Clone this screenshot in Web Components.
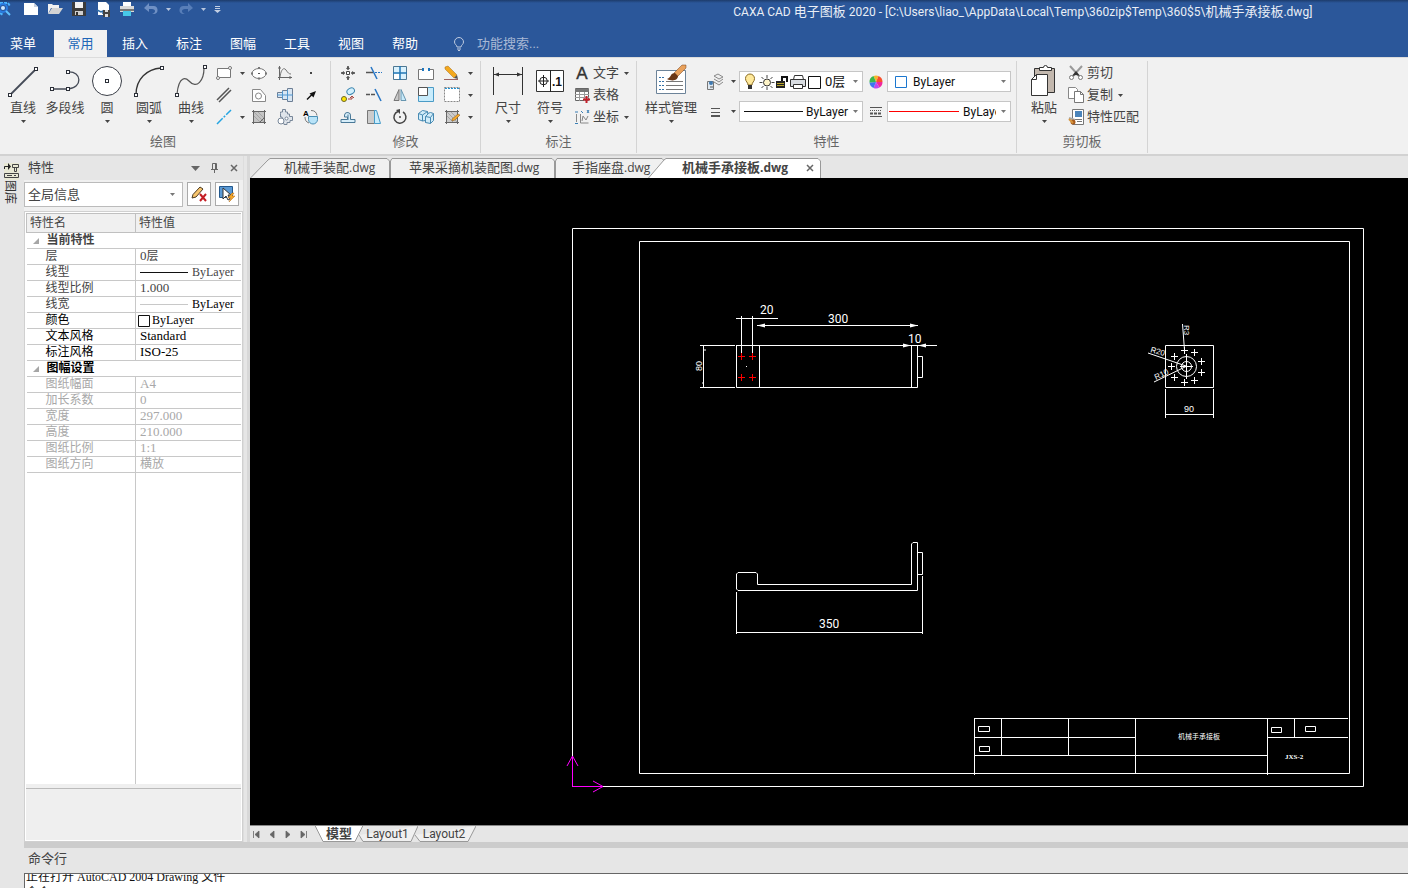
<!DOCTYPE html>
<html lang="zh-CN">
<head>
<meta charset="utf-8">
<title>CAXA CAD 电子图板 2020</title>
<style>
html,body{margin:0;height:100%;overflow:hidden}
body{font:13px/18px Roboto,"Noto Sans CJK SC",sans-serif;color:#444;background:#e6e6e6}
</style>
</head>
<body>
<cad-app></cad-app>
<script>
const base = `<style>
*{box-sizing:border-box}
button,select,input{font:inherit;color:inherit;background:none;border:0;padding:0;margin:0;outline:0}
svg{display:block;flex:none}
.l{font-size:12px}
:host([hidden]){display:none}
</style>`;

/* Latin runs are set one size below the Chinese ones */
const mix = s => s.replace(/[\x20-\x7e]+/g, m => `<span class="l">${m}</span>`);

function define(name, render) {
  customElements.define(name, class extends HTMLElement {
    connectedCallback() {
      if (this.shadowRoot) return;
      this.attachShadow({mode: 'open'}).innerHTML = base + render(this);
    }
  });
}

const sq = (x, y, s = 3) => `<rect x="${x}.500" y="${y}.500" width="${s}" height="${s}" fill="#fff" stroke="#2b2f38"/>`;
const caret = (c = '#444') => `<svg width="5" height="3" viewBox="0 0 5 3"><path d="M0 0h5L2.500 3z" fill="${c}"/></svg>`;

const small = {
  rect: `<path d="M1.500 3.500h13v9h-13z" fill="#fff" stroke="#777"/><circle cx="14" cy="3" r="1.500" fill="#fff" stroke="#777"/><circle cx="2" cy="13" r="1.500" fill="#fff" stroke="#777"/>`,
  ellipse: `<ellipse cx="8" cy="8.500" rx="7" ry="5" fill="#fff" stroke="#777"/><rect x="7" y="8" width="2" height="1" fill="#555"/><path d="M7 3h2M7 13.500h2M0 8.500h2M14 8.500h2" stroke="#777" stroke-width="2"/>`,
  curve: `<path d="M2.500 1v14M1 12.500h14M1 3h3M13 11v3" stroke="#666" fill="none"/><path d="M3 12C4 4 7 2 9 5S12 9 14 9" stroke="#777" fill="none"/>`,
  dot: `<rect x="7" y="7" width="2" height="2" fill="#444"/>`,
  parallel: `<path d="M1 13 13 1M3 15 15 3" stroke="#555" stroke-width="1.500"/>`,
  shape: `<path d="M1.500 2.500h8l5 6v6h-13z" fill="#fff" stroke="#888"/><circle cx="7.500" cy="9" r="3" fill="#fff" stroke="#888"/>`,
  shaft: `<path d="M.5 5.500h5v-2h5v-2h5v13h-5v-2h-5v-2h-5z" fill="#d8e6f3" stroke="#6d7e94"/><path d="M5.500 4v8M10.500 3v10M0 8h16" stroke="#5196cf"/>`,
  arrow: `<path d="M4 12.500 9 7.500" stroke="#111" stroke-width="1.500"/><path d="m13 4-2.500 6.500-4-4z" fill="#111"/>`,
  center: `<path d="M1 15 15 1" stroke="#25a5e2" stroke-width="1.500" stroke-dasharray="8 1.500 2 1.500"/>`,
  hatch: `<path d="M3 3h10v10H3z" fill="#c4c4c4"/><path d="M1 2.500h14M1 13.500h14M2.500 1v14M13.500 1v14" stroke="#666"/><path d="m3 7 6 6M3 3l10 10M7 3l6 6" stroke="#a5a5a5"/><path d="m9 13 4-4" stroke="#666"/>`,
  gears: `<path d="M3.500 4.500V3h2V.500h3V3h2v2h2v2.500h3v4h-2.500v2h-3v2h-3l-1-4-1-3.500H3.500z" fill="#dfe4ea" stroke="#788799"/><circle cx="4" cy="12" r="3" fill="#fff" stroke="#788799"/><circle cx="9.500" cy="9.500" r="1.500" fill="#fff" stroke="#788799"/>`,
  areaA: `<path d="M5.500 7.500h9v3a4.500 4.500 0 0 1-9 0z" fill="#b8e3f8" stroke="#4b8fb4"/><path d="M8 1.500a6 6 0 0 1 6 5M2 8c0 3 1 5 4 6" stroke="#777" fill="none"/><text x="0" y="7" font-size="8" font-weight="700" font-family="Liberation Sans">A</text>`,
  move: `<path d="M6.500 6.500h3v3h-3z" fill="#fff" stroke="#444"/><path d="M8 1v4M8 11v4M1 8h4M11 8h4" stroke="#555" stroke-width="1.500"/><path d="M6 4h4L8 1zM6 12h4l-2 3zM4 6v4L1 8zM12 6v4l3-2z" fill="#555"/>`,
  trim: `<path d="m5 2 6 12" stroke="#2876c5" stroke-width="1.500"/><path d="M0 7.500h7" stroke="#555" stroke-width="1.500"/><path d="M9 7.500h7" stroke="#2876c5" stroke-dasharray="2 1"/>`,
  array: `<path d="M1.500 1.500h13v13h-13z" fill="#d9f1fd" stroke="#4c7792"/><path d="M2 9h5v5H2z" fill="#fff"/><path d="M8 1v14M1 8h14" stroke="#2277b5" stroke-width="1.500"/>`,
  split: `<path d="M4 4.500H.5v10h15v-10H12" fill="#fff" stroke="#777"/><path d="M5 3v3M11 3v3" stroke="#1d75bd" stroke-width="2"/>`,
  erase: `<path d="m1 2 3-1 9 9-3 3L1 4z" fill="#f4a91e" stroke="#a36b1c" stroke-width=".5"/><path d="m10 13 4 1-1-4z" fill="#555"/><path d="M0 14.500h14" stroke="#9b6262"/>`,
  copy: `<ellipse cx="10.500" cy="4.500" rx="4" ry="3" transform="rotate(-30 10 4)" fill="#d1effc" stroke="#3e86af"/><circle cx="4" cy="12" r="2.500" fill="#ffe600" stroke="#6b6426"/><path d="M8 12h4V9l-2 2m2-2 2 2" stroke="#a7463f" fill="none"/>`,
  extend: `<path d="m9 2 6 12" stroke="#2876c5" stroke-width="1.500"/><path d="M0 7.500h10" stroke="#555" stroke-width="1.500" stroke-dasharray="4 1"/>`,
  mirror: `<path d="M7 2.500v11H2z" fill="#c8c8c8" stroke="#777"/><path d="M9 2.500v11h5z" fill="#c8eafa" stroke="#6695af"/>`,
  scale: `<path d="M.5.500h15v14H.500z" fill="#c8ecfc" stroke="#4a9bc6"/><path d="M.5.500h9v8h-9z" fill="#fff" stroke="#555"/>`,
  stretch: `<path d="M.5.500h15v14H.500z" fill="#fff" stroke="#888" stroke-dasharray="2 1"/><path d="M1 1.500h14" stroke="#2294d4" stroke-dasharray="2 1"/>`,
  offset: `<path d="M1 13.500h14v-3h-4.500V7a3 3 0 0 0-6-1v2h3v2.500H1z" fill="#d7eefa" stroke="#497897"/><path d="M8 5.500V11" stroke="#497897"/>`,
  taper: `<path d="M1.500 1.500h7v13h-7z" fill="#ccc" stroke="#777"/><path d="M8.500 1.500h2l4 13h-6z" fill="#c8ecfc" stroke="#469bc8"/>`,
  rotate: `<path d="M6 2.500a6 6 0 1 0 5 .500" fill="none" stroke="#444" stroke-width="1.500"/><path d="m4 1 4-1v5z" fill="#444"/><circle cx="8" cy="8" r="1" fill="#444"/>`,
  cube: `<path d="m.5 4.500 4-3 5 1v2l3-1 3 1v7l-3 3-5-1v-2l-3 .500-4-1.500z" fill="#d1ecf9" stroke="#478ab2"/><path d="m.5 4.500 4 1.500v6M4.500 6l5-3.500M7.500 7.500l5 1v6M7.500 7.500v6M12.500 8.500l3-4M7.500 7.500l3-3" fill="none" stroke="#478ab2"/>`,
  edit: `<path d="M3 3h10v10H3z" fill="#ccc"/><path d="M1 2.500h14M1 13.500h14M2.500 1v14M13.500 1v14" stroke="#666"/><path d="m3 7 6 6M3 3l10 10M7 3l6 6" stroke="#a5a5a5"/><path d="m8 10 6-5 2 1-5 5-3 1z" fill="#f5a82b" stroke="#79521c" stroke-width=".5"/>`,
  textA: `<text x="8" y="14" text-anchor="middle" font-size="17" font-family="Liberation Sans" fill="#333" stroke="#333" stroke-width=".4">A</text>`,
  table: `<path d="M1.500 1.500h13v12h-13z" fill="#fff" stroke="#666"/><path d="M1 2h14v3H1z" fill="#777"/><path d="M1 7.500h14M1 10.500h14M5.500 5v9M10.500 5v9" stroke="#999"/><path d="M12.500 9v7M9 12.500h7" stroke="#c3202b" stroke-width="2"/>`,
  coord: `<path d="M2.500 5v8M6.500 5v9h8M8 12l1-5 3 4 2-4" fill="none" stroke="#888"/><path d="M1 3h3M1 14.500h3M7 2l2 2M13 1l2 3M13 4l2-3" stroke="#3a7fb5"/>`,
  layers: `<path d="m7 2 4-2 5 3-4 2zM7 5l5 3 4-3M7 8l5 3 4-3" fill="#eee" stroke="#888"/><path d="M.5 7.500h6v8h-6z" fill="#dfe8f0" stroke="#777"/><circle cx="4" cy="9" r="2" fill="#3f79b0"/><path d="M3 13h3" stroke="#555"/>`,
  lines: `<path d="M4 4.500h9M4 8.500h9" stroke="#555"/><path d="M4 12h9" stroke="#555" stroke-width="2"/>`,
  wheel: `<path d="M8 8 5.500 2A6.500 6.500 0 0 1 10.500 2z" fill="#f7b62b"/><path d="m8 8 2.500-6A6.500 6.500 0 0 1 14.500 8z" fill="#f9502b"/><path d="M8 8h6.500a6.500 6.500 0 0 1-3 5.500z" fill="#f0279c"/><path d="m8 8 3.500 5.500a6.500 6.500 0 0 1-6 .500z" fill="#c046ee"/><path d="m8 8-2.500 6A6.500 6.500 0 0 1 1.500 8.500z" fill="#3b76f0"/><path d="M8 8l-6.500.500A6.500 6.500 0 0 1 5.500 2z" fill="#3cb84c"/>`,
  ltype: `<path d="M2 3.500h12" stroke="#555"/><path d="M2 6.500h12" stroke="#555" stroke-dasharray="1 1"/><path d="M2 9.500h12" stroke="#555" stroke-width="2" stroke-dasharray="3 1"/><path d="M2 12.500h12" stroke="#555"/>`,
  cut: `<path d="m2 1 9 10M14 1 5 11" stroke="#999" stroke-width="2"/><path d="m8 6 4 5-4-1-4 1z" fill="#333"/><circle cx="3.500" cy="12.500" r="2" fill="#fff" stroke="#777"/><circle cx="12.500" cy="12.500" r="2" fill="#fff" stroke="#777"/>`,
  dup: `<path d="M.5.500h7l2 2v9H.500z" fill="#fff" stroke="#888"/><path d="M6.500 4.500h6l3 3v8h-9z" fill="#fff" stroke="#777"/><path d="M12.500 4.500v3h3" fill="none" stroke="#777"/>`,
  match: `<path d="M4.500.500h11v15h-11z" fill="#fff" stroke="#777"/><path d="M7 2h7v6H7z" fill="#4a84bb"/><path d="M7 10.500h7M9 12.500h5" stroke="#777"/><path d="m1 9 6 2" stroke="#aaa" stroke-width="2"/><circle cx="5" cy="13" r="2.500" fill="#a85b1c"/><path d="m1 10 4 4" stroke="#d7963e" stroke-width="2"/>`
};
const big = {
  line: `<path d="M2.500 30.500 30 3" stroke="#454b57" stroke-width="1.800"/>${sq(1, 28)}${sq(27, 2)}`,
  pline: `<path d="M3 24h16M19 7c14-1 15 16 0 17" fill="none" stroke="#454b57" stroke-width="1.300"/>${sq(1, 22)}${sq(17, 22)}${sq(17, 5)}`,
  circle: `<circle cx="16" cy="16" r="14.500" fill="#fff" stroke="#3b3f48"/>${sq(14, 14)}`,
  arc: `<path d="M3 29.500C3 14 14 4 28 3" fill="none" stroke="#333" stroke-width="1.300"/>${sq(1, 28)}${sq(27, 1)}`,
  spline: `<path d="M2 29C4 10 11 13 14 16c8 9 15-1 15-13" fill="none" stroke="#555" stroke-width="1.200"/>${sq(0, 28)}${sq(28, 0)}`,
  dim: `<path d="M1.500 2v28M30.500 2v28" stroke="#333"/><path d="M2 9.500h28" stroke="#333"/><path d="m2 9.500 5-2v4zM30 9.500l-5-2v4z" fill="#333"/>`,
  symbol: `<path d="M2.500 5.500h27v21h-27z" fill="#fff" stroke="#333"/><path d="M16.500 5v22M4 16h11M9.500 10v12" stroke="#222"/><circle cx="9.500" cy="16" r="3.800" fill="none" stroke="#222"/><text x="18" y="21" font-family="Liberation Sans" font-size="12" font-weight="700" fill="#111">.1</text>`,
  style: `<path d="M1.500 5.500h29v23h-29z" fill="#fff" stroke="#6c8399"/><path d="M4 12.500h5M4 16.500h5M4 20.500h5M4 24.500h5" stroke="#3472a8" stroke-dasharray="2 1"/><path d="M11 16.500h17M11 20.500h17M11 24.500h17" stroke="#777"/><path d="m19 8 8-8h4v3L22 12z" fill="#e9a15b" stroke="#75401c" stroke-width=".5"/><path d="M20 8c-5 0-3 4-8 6 6 3 11 1 11-3z" fill="#6b3715"/>`,
  paste: `<path d="M6.500 3.500h20v24h-20z" fill="#c3b8ae" stroke="#333"/><path d="M11.500 5.500v-3h4a2 2 0 0 1 4 0h4v3z" fill="#fff" stroke="#333"/><path d="M3.500 14.500 8.500 9.500h11v21h-16z" fill="#fff" stroke="#333"/><path d="M3.500 14.500h5v-5" fill="none" stroke="#333"/>`
};
const icon = (n, s = 16) => `<svg width="${s}" height="${s}" viewBox="0 0 ${s} ${s}" style="overflow:visible">${(s === 32 ? big : small)[n]}</svg>`;

/* ---------- title bar ---------- */
define('title-bar', () => `<style>
:host{display:flex;height:30px;color:#e9eef6;background:linear-gradient(#1d3c6c,#2b579a 3px)}
.quick{flex:0 0 45%;display:flex;align-items:flex-start;padding-top:1px}
.quick button{height:16px;display:flex;align-items:center;justify-content:center;width:24px}
.quick .c{width:11px}
.quick .logo{width:19px;justify-content:flex-start}
.quick .last{margin-left:3px}
h1{flex:1;margin:0;padding:3px 0 0 4px;font-size:13px;line-height:18px;font-weight:400;text-align:center;white-space:nowrap}
</style>
<div class="quick">
<button class="logo" aria-label="应用"><svg width="12" height="14" viewBox="0 0 12 14"><path d="M0 1h8l2 3M0 11l3 2" stroke="#4ab4ff" stroke-width="2" fill="none" stroke-dasharray="3 1"/><circle cx="3" cy="6" r="4" fill="none" stroke="#2a7be0" stroke-width="2"/><circle cx="3" cy="6" r="2" fill="#cfe9ff"/><path d="m6 9 4 4" stroke="#5fc0ff" stroke-width="2"/></svg></button>
<button aria-label="新建"><svg width="16" height="12" viewBox="0 0 16 12"><path d="M1 0h10l4 4v8H1z" fill="#fff"/><path d="M11 0v4h4" fill="#c8d2e0"/></svg></button>
<button aria-label="打开"><svg width="16" height="12" viewBox="0 0 16 12"><path d="M1 11V1h4l1 1h6v3H4z" fill="#f1f1f1"/><path d="m1 11 4-6h11l-4 6z" fill="#d3d3d3"/></svg></button>
<button aria-label="保存"><svg width="14" height="14" viewBox="0 0 14 14"><path d="M0 0h14v14H0z" fill="#3b3b3b"/><path d="M3 0h8v6H3z" fill="#f2f2f2"/><path d="M3 9h8v4H3z" fill="#cfcfcf"/><path d="M4 10h2v3H4z" fill="#333"/></svg></button>
<button aria-label="另存为"><svg width="16" height="16" viewBox="0 0 16 16"><path d="M3 1h8l3 3v10H3z" fill="#fff"/><path d="m2 9 4 2 2-1v3" stroke="#316da8" stroke-width="1.500" fill="none"/><path d="M8 9h7v7H8z" fill="#444"/><path d="M10 9h3v2h-3zM10 13h3v3h-3z" fill="#ddd"/></svg></button>
<button aria-label="打印"><svg width="16" height="16" viewBox="0 0 16 16"><path d="M4 1h8v4H4z" fill="#fff"/><path d="M1 5h14v6H1z" fill="#d9d9d9"/><path d="M1 8h14v2H1z" fill="#777"/><path d="M4 10h8v5H4z" fill="#48c9e8"/></svg></button>
<button aria-label="撤销"><svg width="14" height="12" viewBox="0 0 14 12"><path d="M5 0v3h4a4 4 0 0 1 1 8H8c4-1 4-5 0-5H5v3L0 5z" fill="#6f90c4"/></svg></button>
<button class="c" aria-label="撤销列表">${caret('#b8c6de')}</button>
<button aria-label="重做"><svg width="14" height="12" viewBox="0 0 14 12"><path d="M9 0v3H5a4 4 0 0 0-1 8h2C2 10 2 6 6 6h3v3l5-4z" fill="#587eb8"/></svg></button>
<button class="c" aria-label="重做列表">${caret('#b8c6de')}</button>
<button class="c last" aria-label="自定义"><svg width="7" height="7" viewBox="0 0 7 7"><path d="M1 0h5v1H1zM1 2h5v1H1zM0 4h7L3.500 7z" fill="#c3cfe3"/></svg></button>
</div>
<h1>${mix('CAXA CAD 电子图板 2020 - [C:\\Users\\liao_\\AppData\\Local\\Temp\\360zip$Temp\\360$5\\机械手承接板.dwg]')}</h1>`);

define('menu-bar', () => `<style>
:host{display:flex;height:27px;background:#2b579a;color:#fff}
button{width:54px;height:27px;text-align:center}
button:first-of-type{width:46px;margin-right:8px}
.on{background:#f1f1f1;color:#2066b8;width:53px;margin-right:1px}
label{display:flex;align-items:center;margin-left:21px;gap:12px}
input{width:90px;height:20px}
input::placeholder{color:#a9b9d5;opacity:1}
</style>
<button>菜单</button><button class="on">常用</button>${['插入','标注','图幅','工具','视图','帮助'].map(t => `<button>${t}</button>`).join('')}
<label><svg width="12" height="14" viewBox="0 0 12 14"><path d="M4 10C4 8 1.500 7.500 1.500 5a4.500 4.500 0 0 1 9 0C10.500 7.500 8 8 8 10z" fill="none" stroke="#c0cce0"/><path d="M4 12h4M5 13.500h2" stroke="#c0cce0"/></svg><input type="text" aria-label="功能搜索" placeholder="功能搜索..."></label>`);

/* ---------- ribbon ---------- */
define('ribbon-group', e => `<style>
:host{display:flex;flex-direction:column;flex:none;height:92px;margin-top:3px;border-right:1px solid #d4d4d4}
.body{display:flex;height:72px;align-items:flex-start}
.name{text-align:center;color:#666;line-height:18px;height:20px}
</style><div class="body"><slot></slot></div><div class="name">${e.getAttribute('label')}</div>`);

define('big-button', e => `<style>
:host{display:block;flex:none;width:42px}
button{width:100%;display:flex;flex-direction:column;align-items:center;white-space:nowrap;padding-top:4px}
.t{height:18px;line-height:18px;margin-top:2px}
.t+svg{margin-top:3px}
</style><button>${icon(e.getAttribute('icon'), 32)}<span class="t">${e.getAttribute('label')}</span>${e.hasAttribute('menu') ? caret() : ''}</button>`);

define('tool-button', e => `<style>
:host{display:flex;align-items:center;height:22px}
button{display:flex;align-items:center;justify-content:center;height:22px;min-width:26px;white-space:nowrap}
.m{min-width:${e.hasAttribute('label') ? 15 : 10}px}
.t{margin-left:3px}
</style><button aria-label="${e.getAttribute('label') || e.getAttribute('icon')}">${icon(e.getAttribute('icon'))}${e.hasAttribute('label') ? `<span class="t">${e.getAttribute('label')}</span>` : ''}</button>${e.hasAttribute('menu') ? `<button class="m" aria-label="更多">${caret()}</button>` : ''}`);

define('prop-combo', e => `<style>
:host{display:flex;align-items:center;width:124px;height:21px;background:#fff;border:1px solid #c6c6c6;color:#111;padding:0 4px}
:host([tight]){padding-left:1px}
select{appearance:none;flex:1 1 0;min-width:0;height:19px;overflow:hidden;white-space:nowrap;font-size:${e.getAttribute('value') === '0层' ? 13 : 12}px}
.c{flex:none;margin-left:5px}
:host([wide]) .c{margin-left:3px}
</style><slot></slot><select aria-label="${e.getAttribute('name')}"><option>${e.getAttribute('value')}</option></select><span class="c">${caret('#777')}</span>`);

const tb = (i, m) => `<tool-button icon="${i}"${m ? ' menu' : ''}></tool-button>`;
define('ribbon-bar', () => `<style>
:host{display:flex;height:99px;background:#f1f1f1;border-top:1px solid #dcdcdc;border-bottom:2px solid #d2d2d2}
.draw{display:grid;grid-template-columns:35px 26px 26px 26px;margin:1px 0 0 -1px}
.draw tool-button{width:26px}
.mod{display:grid;grid-template-columns:26px 26px 26px 26px 36px;margin:1px 5px 0 4px}
.col{display:flex;flex-direction:column;margin:1px 0 0 3px}
.gap{margin-left:6px}
.wide{width:56px}
.props{display:grid;grid-template-columns:37px 124px 24px 124px;row-gap:9px;align-items:center;margin:10px 5px 0 3px}
.props tool-button{height:21px}
</style>
<ribbon-group label="绘图" style="width:331px;padding:0 6px 0 2px">
<big-button icon="line" label="直线" menu></big-button><big-button icon="pline" label="多段线"></big-button><big-button icon="circle" label="圆" menu></big-button><big-button icon="arc" label="圆弧" menu></big-button><big-button icon="spline" label="曲线" menu></big-button>
<div class="draw">${tb('rect',1)+tb('ellipse')+tb('curve')+tb('dot')+tb('parallel')+tb('shape')+tb('shaft')+tb('arrow')+tb('center',1)+tb('hatch')+tb('gears')+tb('areaA')}</div>
</ribbon-group>
<ribbon-group label="修改" style="width:150px">
<div class="mod">${tb('move')+tb('trim')+tb('array')+tb('split')+tb('erase',1)+tb('copy')+tb('extend')+tb('mirror')+tb('scale')+tb('stretch',1)+tb('offset')+tb('taper')+tb('rotate')+tb('cube')+tb('edit',1)}</div>
</ribbon-group>
<ribbon-group label="标注" style="width:156px">
<big-button class="gap" icon="dim" label="尺寸" menu></big-button><big-button icon="symbol" label="符号" menu></big-button>
<div class="col"><tool-button icon="textA" label="文字" menu></tool-button><tool-button icon="table" label="表格"></tool-button><tool-button icon="coord" label="坐标" menu></tool-button></div>
</ribbon-group>
<ribbon-group label="特性" style="width:380px">
<big-button class="gap wide" icon="style" label="样式管理" menu></big-button>
<div class="props">
<tool-button icon="layers" menu></tool-button>
<prop-combo name="图层" value="0层"><svg width="80" height="18" viewBox="0 0 80 18" style="display:block;flex:none;margin-right:1px">
<path d="M4 12C4 9 1.500 9 1.500 5.500a4.500 4.500 0 0 1 9 0C10.500 9 8 9 8 12z" fill="#ffe99b" stroke="#8a6b22"/><path d="M4 13h4M4 15h4" stroke="#333" stroke-width="2"/>
<circle cx="23" cy="9.500" r="3.500" fill="#fff5c8" stroke="#333"/><path d="M23 2v3M23 14v3M15.500 9.500h3M27.500 9.500h3M17.500 4l2 2M26.500 13l2 2M28.500 4l-2 2M19.500 13l-2 2" stroke="#444"/>
<path d="M38 9V4h5v5" fill="none" stroke="#111" stroke-width="2"/><path d="M32 8h9v7h-9z" fill="#222"/><path d="M33 10.500h7M33 12.500h7" stroke="#b6a32b"/>
<path d="M50.500 2.500h8l1 4h-10z" fill="#fff" stroke="#333"/><path d="M46.500 6.500h15v7h-15z" fill="#d9dde2" stroke="#333"/><path d="M49.500 11.500h9v4h-9z" fill="#fff" stroke="#333"/>
<path d="M64.500 3.500h12v12h-12z" fill="#fff" stroke="#111"/></svg></prop-combo>
<tool-button icon="wheel"></tool-button>
<prop-combo name="颜色" value="ByLayer"><svg width="21" height="14" viewBox="0 0 21 14" style="flex:none"><path d="M3.500 1.500h11v11h-11z" fill="#fff" stroke="#1b77cf"/></svg></prop-combo>
<tool-button icon="lines" menu></tool-button>
<prop-combo wide name="线型" value="ByLayer"><svg width="62" height="3" style="flex:none"><path d="M0 1.500h59" stroke="#111"/></svg></prop-combo>
<tool-button icon="ltype"></tool-button>
<prop-combo tight name="线宽" value="ByLayer"><svg width="74" height="3" style="flex:none"><path d="M0 1.500h70" stroke="#f00"/></svg></prop-combo>
</div>
</ribbon-group>
<ribbon-group label="剪切板" style="width:131px">
<big-button class="gap" icon="paste" label="粘贴" menu></big-button>
<div class="col"><tool-button icon="cut" label="剪切"></tool-button><tool-button icon="dup" label="复制" menu></tool-button><tool-button icon="match" label="特性匹配"></tool-button></div>
</ribbon-group>`);

/* ---------- side dock and property panel ---------- */
define('dock-strip', () => `<style>
:host{display:block;flex:none;width:24px;background:#e6e6e6;padding:7px 0 0 4px}
button{display:flex;flex-direction:column;align-items:center;width:15px;color:#333}
span{writing-mode:vertical-rl;text-orientation:sideways;font:12px/15px "Noto Sans CJK SC",sans-serif}
</style><button><svg width="15" height="17" viewBox="0 0 15 17"><path d="M0 0h15v17H0z" fill="#e8e8d4"/><path d="M.5 6V3.500H5" fill="none" stroke="#222"/><path d="M4 0v7l3-3.500z" fill="#222"/><path d="M8.500 1.500h6v3h-6zM10.500 5v3.500h2V5M.500 10.500h14v4H.500z" fill="none" stroke="#444"/><path d="M3 12.500h5M10 12.500h2" stroke="#444"/></svg><span>图库</span></button>`);

const line = c => `<svg width="48" height="3" style="margin-right:4px"><path d="M0 1.500h48" stroke="${c}"/></svg>`;
const rows = [
  ['', '层', '0层'],
  ['', '线型', `<div class="v">${line('#111')}<span class="b">ByLayer</span></div>`],
  ['', '线型比例', '1.000'],
  ['', '线宽', `<div class="v k">${line('#c8c8c8')}<span class="b">ByLayer</span></div>`],
  ['k', '颜色', `<div class="v n"><svg width="12" height="12"><path d="M.5.500h11v11H.500z" fill="#fff" stroke="#111"/></svg><span class="b">ByLayer</span></div>`],
  ['k', '文本风格', 'Standard'],
  ['k', '标注风格', 'ISO-25']];
const paper = [['图纸幅面','A4'],['加长系数','0'],['宽度','297.000'],['高度','210.000'],['图纸比例','1:1'],['图纸方向','横放']];
const val = s => s[0] === '<' ? s : s.replace(/[\x20-\x7e]+/g, m => `<span class="w">${m}</span>`);
const head = (t, c) => `<tr><th colspan="2" scope="rowgroup" class="${c}"><svg width="6" height="6" viewBox="0 0 6 6"><path d="M6 0v6H0z" fill="#a6a6a6"/></svg>${t}</th></tr>`;
define('property-panel', () => `<style>
:host{display:flex;flex-direction:column;flex:none;width:219px;background:#f0f0f0}
header{display:flex;align-items:center;height:24px;background:#e6e6e6;padding:0 0 0 4px}
header b{flex:1;font-weight:400}
header button{width:19px;height:16px;display:flex;align-items:center;justify-content:center}
.pick{display:flex;height:31px;padding-top:2px;gap:4px}
.sel{display:flex;align-items:center;width:159px;height:25px;background:#fff;border:1px solid #bbb;padding:0 7px 0 3px}
.sel select{appearance:none;flex:1;height:22px}
.pick button{width:24px;height:24px;background:#fff;border:1px solid #aaa;display:flex;align-items:center;justify-content:center}
.box{flex:1;display:flex;flex-direction:column;border:1px solid #d0d0d0;background:#fff;padding:1px}
table{border-collapse:collapse;table-layout:fixed;width:100%;font:12px/15px "Liberation Serif","Noto Sans CJK SC",sans-serif}
.w{font-size:13px;line-height:12px}
td,th{height:16px;padding:0 0 0 4px;border-bottom:1px solid #c8c8c8;text-align:left;white-space:nowrap;overflow:hidden}
tbody td:first-child{border-right:1px solid #c8c8c8;padding-left:19px}
thead th{height:19px;background:#f0f0f0;font-weight:400;border:1px solid #c0c0c0;border-right:0;padding-left:3px}
tbody th{font-weight:700}
tbody th svg{display:inline-block;margin:0 8px 0 2px}
.v{display:flex;align-items:center;height:15px}.v.n{margin-left:-2px}.v svg{flex:none}.n .b{margin-left:2px}
.k,.k td{color:#000}.g td{color:#a8a8a8}
.fill{flex:1;display:flex}.fill i{width:110px;border-right:1px solid #c8c8c8}
footer{height:56px;background:#efefef;border-top:4px solid #efefef;display:flex}
footer i{flex:1;border-top:1px solid #bbb}
</style>
<header><b>特性</b><button aria-label="菜单"><svg width="9" height="5"><path d="M0 0h9L4.500 5z" fill="#666"/></svg></button><button aria-label="固定"><svg width="9" height="10" viewBox="0 0 9 10"><path d="M2.500 6V.500h4V6M1 6.500h7M4.500 7v3" fill="none" stroke="#666"/><path d="M5 1h1v5H5z" fill="#666"/></svg></button><button aria-label="关闭"><svg width="8" height="8"><path d="m1 1 6 6M7 1 1 7" stroke="#666" stroke-width="1.500"/></svg></button></header>
<div class="pick"><div class="sel"><select aria-label="信息范围"><option>全局信息</option></select>${caret('#777')}</div>
<button aria-label="清除"><svg width="18" height="18" viewBox="0 0 18 18"><path d="M3 9.500 10 2l3 2-7 8-4 1z" fill="#f8c56d" stroke="#4a3a22"/><path d="m10 9 6 7M16 9l-6 7" stroke="#c41d24" stroke-width="2"/></svg></button>
<button aria-label="快速选择"><svg width="18" height="18" viewBox="0 0 18 18"><path d="M1.500 1.500h13v11h-13z" fill="#5b9ad5" stroke="#23588c"/><path d="M5 3v11l3-3 2 4 2-1-2-4h3z" fill="#fff" stroke="#333"/><path d="m14 8-4 5h3l-2 4 6-6h-3l2-3z" fill="#f7a928" stroke="#b56a14" stroke-width=".5"/></svg></button></div>
<div class="box"><table><colgroup><col style="width:109px"><col></colgroup>
<thead><tr><th scope="col">特性名</th><th scope="col">特性值</th></tr></thead><tbody>
${head('当前特性', '')}${rows.map(r => `<tr class="${r[0]}"><td>${r[1]}</td><td>${val(r[2])}</td></tr>`).join('')}
${head('图幅设置', 'k')}${paper.map(r => `<tr class="g"><td>${r[0]}</td><td>${val(r[1])}</td></tr>`).join('')}
</tbody></table><div class="fill"><i></i></div><footer><i></i></footer></div>`);

/* ---------- document tabs ---------- */
define('doc-tab', e => {
  const w = +e.getAttribute('w'), on = e.hasAttribute('active'), sl = +e.getAttribute('slant');
  return `<style>
:host{display:block;position:relative;flex:none;width:${w}px;height:20px}
svg.bg{position:absolute;inset:0}
button{position:relative;display:flex;align-items:center;width:100%;height:20px;padding-left:${e.getAttribute('pad')}px;white-space:nowrap;font-weight:${on ? 700 : 400}}
.l{font-family:"Open Sans",sans-serif}
.x{margin-left:18px}
</style><svg class="bg" width="${w}" height="20"><path d="M${sl ? `.5 20 ${sl} 2` : '.5 20V3'}L${sl + 2} .5H${w - 3}L${w - .5} 3V20" fill="${on ? '#fff' : '#f0f0f0'}" stroke="#999"/></svg><button>${mix(e.getAttribute('label'))}${on ? '<svg class="x" width="8" height="8"><path d="m1 1 6 6M7 1 1 7" stroke="#666" stroke-width="1.500"/></svg>' : ''}</button>`;
});
define('doc-tabs', () => `<style>:host{display:flex;height:22px;padding-top:2px;background:#e6e6e6}.over{margin-left:-17px}</style>
<doc-tab label="机械手装配.dwg" w="140" slant="18" pad="34"></doc-tab><doc-tab label="苹果采摘机装配图.dwg" w="165" slant="0" pad="19"></doc-tab><doc-tab label="手指座盘.dwg" w="110" slant="0" pad="17"></doc-tab><doc-tab class="over" active label="机械手承接板.dwg" w="173" slant="16" pad="34"></doc-tab>`);

/* ---------- drawing area ---------- */
const cross = (x, y, c) => `<path d="M${x - 3} ${y}.500h7M${x}.500 ${y - 3}v7" stroke="${c}"/>`;
const arrowL = (x, y) => `<path d="M${x} ${y}.500l8-2v4z" fill="#fff" stroke="none"/>`;
const arrowR = (x, y) => `<path d="M${x} ${y}.500l-8-2v4z" fill="#fff" stroke="none"/>`;
define('cad-canvas', () => `<style>
:host{display:block;flex:1;min-height:0;background:#000;overflow:hidden}
svg{width:100%;height:100%}
text{fill:#fff;stroke:none;font-family:"Liberation Sans",sans-serif}
.d{font-family:Roboto,sans-serif;font-size:12px}.s{font-size:9px}.t{font-size:8px}
</style>
<svg role="img" aria-label="机械手承接板图纸"><g transform="translate(-250 -178)" fill="none" stroke="#fff">
<path d="M572.500 228.500h791v558h-791zM639.500 241.500h710v532h-710z"/>
<g id="title-block"><path d="M974 718.500h374M974.500 718v57M1001.500 718v37M1068.500 718v37M1135.500 718v55M1267.500 718v57M1294.500 718v19M974 737.500h161M1267 737.500h81M974 755.500h293"/>
<path d="M978.500 726.500h11v5h-11zM979.500 746.500h10v5h-10zM1271.500 727.500h10v5h-10zM1305.500 726.500h10v5h-10z"/>
<text x="1178" y="739" style="font:7px 'Noto Sans CJK SC',sans-serif">机械手承接板</text>
<text x="1285" y="759" style="font:bold 7px 'Liberation Serif',serif">JXS-2</text></g>
<g id="plan"><path d="M700 345.500h35M700 387.500h35M703.500 345v42M736 345.500h201M736.500 345v42.500H917.500V345M759.500 345v42M911.500 345v42M917 356.500h5.500v21H917"/>
<path d="M736 318.500h42M741.500 316v38M752.500 316v38M757 325.500h161"/><path d="M704 350h2M702 383h2"/>
${arrowL(757, 325)}${arrowR(918, 325)}${arrowR(911, 345)}${arrowL(918, 345)}
${cross(741, 356, '#f00')}${cross(752, 356, '#f00')}${cross(741, 377, '#f00')}${cross(752, 377, '#f00')}<path d="M746 366.500h1"/>
<text class="d" x="760" y="314">20</text><text class="d" x="828" y="323">300</text><text class="d" x="908" y="343">10</text>
<text class="s" transform="translate(702 371) rotate(-90)">80</text></g>
<g id="side"><path d="M736.500 574l1.500-1.500h18l1.500 1.500v10.500h154v-40.500l1.500-1.500h4.500v48H738l-1.500-1.500zM917.500 552.500h5v22h-5M736.500 592v42M922.500 576v58M736 632.500h187"/>
<text class="d" x="819" y="628">350</text></g>
<g id="end"><path d="M1165.500 345.500h48v42h-48zM1165.500 389v29M1213.500 389v29M1165 414.500h48"/><circle cx="1186.500" cy="366.500" r="10"/><circle cx="1186.500" cy="366.500" r="5"/>
<path d="M1148 353l38 13M1154 382l33-16M1182.500 324l2 26M1180 366.500h13M1186.500 354v25"/>
${[[1184,350],[1194,352],[1201,361],[1201,372],[1194,380],[1184,382],[1174,377],[1171,366],[1174,356]].map(p => cross(p[0], p[1], '#fff')).join('')}
<text class="s" x="1184" y="412">90</text>
<text class="t" transform="translate(1150 352) rotate(16)">R20</text><text class="t" transform="translate(1156 380) rotate(-26)">R10</text><text class="t" transform="translate(1184 325) rotate(90)">R3</text></g>
<g id="origin" stroke="#f0f"><path d="M572.500 757v29.500H603M567 766l5.500-10 5.500 10M593 781l10 5.500-10 5.500"/></g>
</g></svg>`);

define('layout-tabs', () => `<style>
:host{display:flex;flex:none;height:17px;border-top:1px solid #888;background:#e6e6e6}
.nav{display:flex;width:65px;padding-left:2px}
.nav button{width:16px;display:flex;align-items:center}
.tab{position:relative;height:16px;flex:none;line-height:14px;text-align:center;margin-right:-6px}
.tab svg{position:absolute;inset:0}
.tab span{position:relative}
.m{width:48px;z-index:1;font-weight:700}.a{width:61px}.b{width:64px}
</style>
<div class="nav">${['M1.500 1v7M7 1v7L3 4.500z','M6 1v7L2 4.500z','M2 1v7l4-3.500z','M2 1v7l4-3.500zM7.500 1v7'].map(d => `<button aria-label="翻页"><svg width="9" height="9"><path d="${d}" fill="#666" stroke="#666" stroke-width=".8"/></svg></button>`).join('')}</div>
<button class="tab m"><svg width="48" height="16"><path d="M0-.5 8 15.500h32L48-.5" fill="#fff" stroke="#999"/></svg><span>模型</span></button>
<button class="tab a"><svg width="61" height="16"><path d="m2 9 4 6.500h48L61 0" fill="#f0f0f0" stroke="#999"/></svg><span class="l">Layout1</span></button>
<button class="tab b"><svg width="64" height="16"><path d="m3 9 5 6.500h48L64 0" fill="#f0f0f0" stroke="#999"/></svg><span class="l">Layout2</span></button>`);

define('command-line', () => `<style>
:host{display:flex;flex-direction:column;flex:none;height:46px;margin-left:24px;border-top:6px solid #ccc;background:#e6e6e6}
h2{margin:0;padding:2px 0 0 4px;font-size:13px;font-weight:400;line-height:18px;height:25px}
.log{flex:1;overflow:hidden;background:#fff;border:1px solid #666;border-width:1px 0 0 1px;color:#111;font:12px/16px "Liberation Serif","Noto Sans CJK SC",sans-serif}
p{margin:0 0 0 1px}
p:first-child{margin-top:-5px}
</style><h2>命令行</h2><div class="log" role="log"><p>正在打开 AutoCAD 2004 Drawing 文件</p><p>命令:</p></div>`);

define('cad-app', () => `<style>
:host{display:flex;flex-direction:column;height:100vh;min-height:500px}
title-bar,menu-bar,ribbon-bar{flex:none}
.main{flex:1;min-height:0;display:flex}
.split{flex:none;width:7px;background:#e6e6e6;border-right:3px solid #d8d8d8;border-left:1px solid #ddd}
.work{flex:1;min-width:0;display:flex;flex-direction:column}
</style><title-bar></title-bar><menu-bar></menu-bar><ribbon-bar></ribbon-bar>
<div class="main"><dock-strip></dock-strip><property-panel></property-panel><div class="split"></div><div class="work"><doc-tabs></doc-tabs><cad-canvas></cad-canvas><layout-tabs></layout-tabs></div></div>
<command-line></command-line>`);
</script>
</body>
</html>
